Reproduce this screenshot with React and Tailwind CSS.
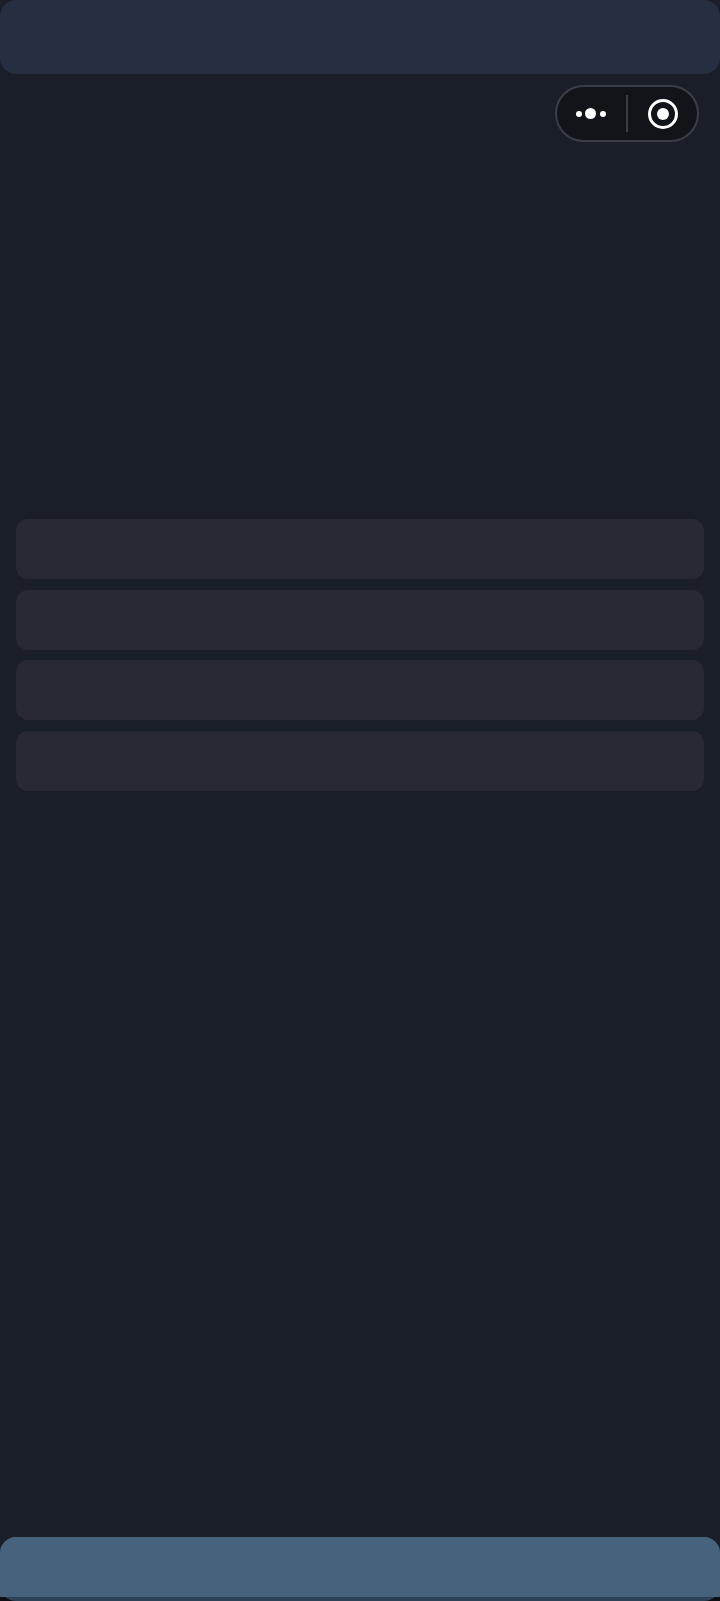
export default function App() {
  return (
    <div className="relative flex h-[1601px] flex-col overflow-hidden bg-[#1a1e28]">
      <div className="h-[74px] rounded-2xl bg-[#262f42]" />

      {/* capsule */}
      <div className="absolute left-[555px] top-[85px] flex h-[57px] w-[144px] items-center rounded-full border-2 border-[#3a3e48] bg-[#111419]">
        <div className="flex w-[69px] items-center justify-center gap-[3.5px] pr-[2px]">
          <span className="h-[6px] w-[6px] rounded-full bg-white" />
          <span className="h-[11px] w-[11px] rounded-full bg-white" />
          <span className="h-[6px] w-[6px] rounded-full bg-white" />
        </div>
        <div className="h-[37px] w-[2px] bg-[#3a3e48]" />
        <div className="flex flex-1 items-center justify-center">
          <div className="flex h-[30px] w-[30px] items-center justify-center rounded-full border-[3px] border-white">
            <span className="h-[12px] w-[12px] rounded-full bg-white" />
          </div>
        </div>
      </div>

      <div className="mt-[445px] flex flex-col gap-[10.67px] px-4">
        <div className="h-[60px] rounded-xl bg-[#282933]" />
        <div className="h-[60px] rounded-xl bg-[#282933]" />
        <div className="h-[60px] rounded-xl bg-[#282933]" />
        <div className="h-[60px] rounded-xl bg-[#282933]" />
      </div>

      <div className="mt-auto rounded-t-2xl bg-[#0e1016]">
        <div className="h-[64px] rounded-2xl bg-[#2d4257]">
          <div className="h-[60px] rounded-t-2xl bg-[#46627c]" />
        </div>
      </div>
    </div>
  )
}
